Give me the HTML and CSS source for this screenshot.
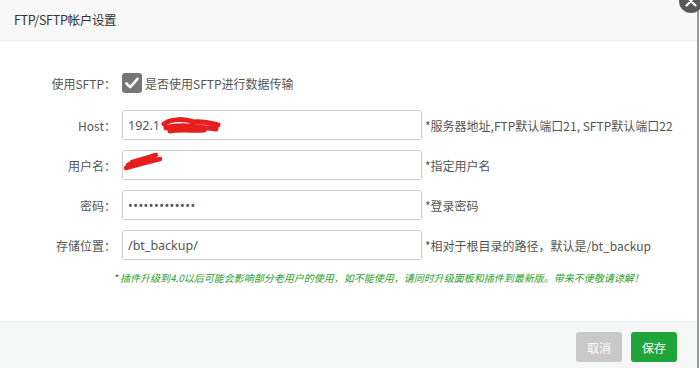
FILE: index.html
```html
<!DOCTYPE html>
<html lang="zh-CN">
<head>
    <meta charset="UTF-8">
    <title>FTP/SFTP帐户设置</title>
    <link rel="stylesheet" href="styles.css">
</head>
<body>
    <div class="dialog">
        <div class="dialog-title">FTP/SFTP帐户设置</div>
        <span class="dialog-close">
            <svg width="24" height="24" viewBox="0 0 24 24">
                <circle cx="12" cy="12" r="12" fill="#595959"/>
                <path d="M7.5 7.5 L16.5 16.5 M16.5 7.5 L7.5 16.5" stroke="#fff" stroke-width="2.2" stroke-linecap="round"/>
            </svg>
        </span>

        <div class="dialog-body">
            <!-- SFTP switch -->
            <div class="line line-check">
                <span class="tname">使用SFTP：</span>
                <span class="checkbox">
                    <svg width="20" height="20" viewBox="0 0 20 20">
                        <path d="M4.5 10.5 L8.2 14.2 L15.5 5.8" fill="none" stroke="#fff" stroke-width="2.6" stroke-linecap="round" stroke-linejoin="round"/>
                    </svg>
                </span>
                <span class="check-text">是否使用SFTP进行数据传输</span>
            </div>

            <div class="line">
                <span class="tname">Host：</span>
                <div class="field">
                    <input class="bt-input" type="text" value="192.1">
                    <svg class="redact redact-host" width="64" height="20" viewBox="0 0 64 20">
                        <path d="M4 8 C12 2 26 3 34 6 C42 5 50 7 58 9 M6 12 C18 8 34 10 56 13 M10 15 C22 13 34 15 44 14" fill="none" stroke="#e61e1e" stroke-width="5" stroke-linecap="round"/>
                    </svg>
                </div>
                <span class="help">*服务器地址,FTP默认端口21, SFTP默认端口22</span>
            </div>

            <div class="line">
                <span class="tname">用户名：</span>
                <div class="field">
                    <input class="bt-input" type="text" value="">
                    <svg class="redact redact-user" width="44" height="22" viewBox="0 0 44 22">
                        <path d="M6 15 C14 10 24 8 34 5 M4 18 C14 15 26 12 38 9 M10 12 C18 9 26 8 32 7" fill="none" stroke="#e61e1e" stroke-width="4.5" stroke-linecap="round"/>
                    </svg>
                </div>
                <span class="help">*指定用户名</span>
            </div>

            <div class="line">
                <span class="tname">密码：</span>
                <input class="bt-input" type="password" value="1234567890123">
                <span class="help">*登录密码</span>
            </div>

            <div class="line">
                <span class="tname">存储位置：</span>
                <input class="bt-input" type="text" value="/bt_backup/">
                <span class="help">*相对于根目录的路径，默认是/bt_backup</span>
            </div>

            <p class="tips"><span class="star">*</span> 插件升级到4.0以后可能会影响部分老用户的使用，如不能使用，请同时升级面板和插件到最新版。带来不便敬请谅解！</p>
        </div>

        <div class="dialog-footer">
            <button class="btn btn-cancel">取消</button>
            <button class="btn btn-save">保存</button>
        </div>
    </div>
</body>
</html>
```

FILE: styles.css
```css
/* General Styles */
* {
    box-sizing: border-box;
    margin: 0;
    padding: 0;
}
body {
    width: 700px;
    height: 368px;
    overflow: hidden;
    background-color: #ffffff;
    font-family: "Noto Sans CJK SC", "Noto Sans", "Liberation Sans", sans-serif;
    font-size: 12px;
    color: #555;
}

/* Dialog */
.dialog {
    position: relative;
    width: 699px;
    height: 368px;
    border-right: 2px solid #9a9a9a;
    background-color: #fff;
}
.dialog-title {
    height: 41px;
    line-height: 40px;
    padding-left: 14px;
    font-size: 12.5px;
    letter-spacing: -0.3px;
    color: #333;
    background-color: #f8f8f8;
    border-bottom: 1px solid #eee;
}
.dialog-close {
    position: absolute;
    top: -11px;
    right: -6px;
    width: 24px;
    height: 24px;
}

/* Form */
.dialog-body {
    height: 280px;
    padding-top: 27px;
}
.line {
    display: flex;
    align-items: center;
    height: 30px;
    margin-bottom: 10px;
}
.line-check {
    margin-bottom: 12px;
}
.tname {
    width: 122px;
    padding-right: 6px;
    text-align: right;
    color: #555;
}
.checkbox {
    display: inline-flex;
    width: 20px;
    height: 20px;
    border-radius: 3px;
    background-color: #767676;
}
.check-text {
    margin-left: 3px;
    color: #555;
}
.field {
    position: relative;
}
.bt-input {
    width: 300px;
    height: 30px;
    padding: 0 5px;
    border: 1px solid #ccc;
    border-radius: 2px;
    font-family: "Noto Sans", "Liberation Sans", sans-serif;
    font-size: 12.5px;
    color: #555;
    outline: none;
}
input[type="password"] {
    letter-spacing: 0.5px;
}
.help {
    margin-left: 3px;
    color: #555;
}
.redact {
    position: absolute;
}
.redact-host {
    left: 38px;
    top: 6px;
}
.redact-user {
    left: 0;
    top: 0;
}

/* Tips */
.tips {
    margin-top: 7px;
    padding-left: 113px;
    font-size: 10px;
    font-style: italic;
    color: #2c9e2c;
}
.tips .star {
    color: #555;
}

/* Footer */
.dialog-footer {
    display: flex;
    justify-content: flex-end;
    gap: 9px;
    height: 47px;
    padding: 10px 20px 0 0;
    background-color: #f6f7f7;
    border-top: 1px solid #eee;
}
.btn {
    width: 46px;
    height: 30px;
    border: none;
    border-radius: 3px;
    font-family: "Noto Sans CJK SC", sans-serif;
    font-size: 12px;
    color: #fff;
}
.btn-cancel {
    background-color: #c9c9c9;
}
.btn-save {
    background-color: #20a53a;
}
```
